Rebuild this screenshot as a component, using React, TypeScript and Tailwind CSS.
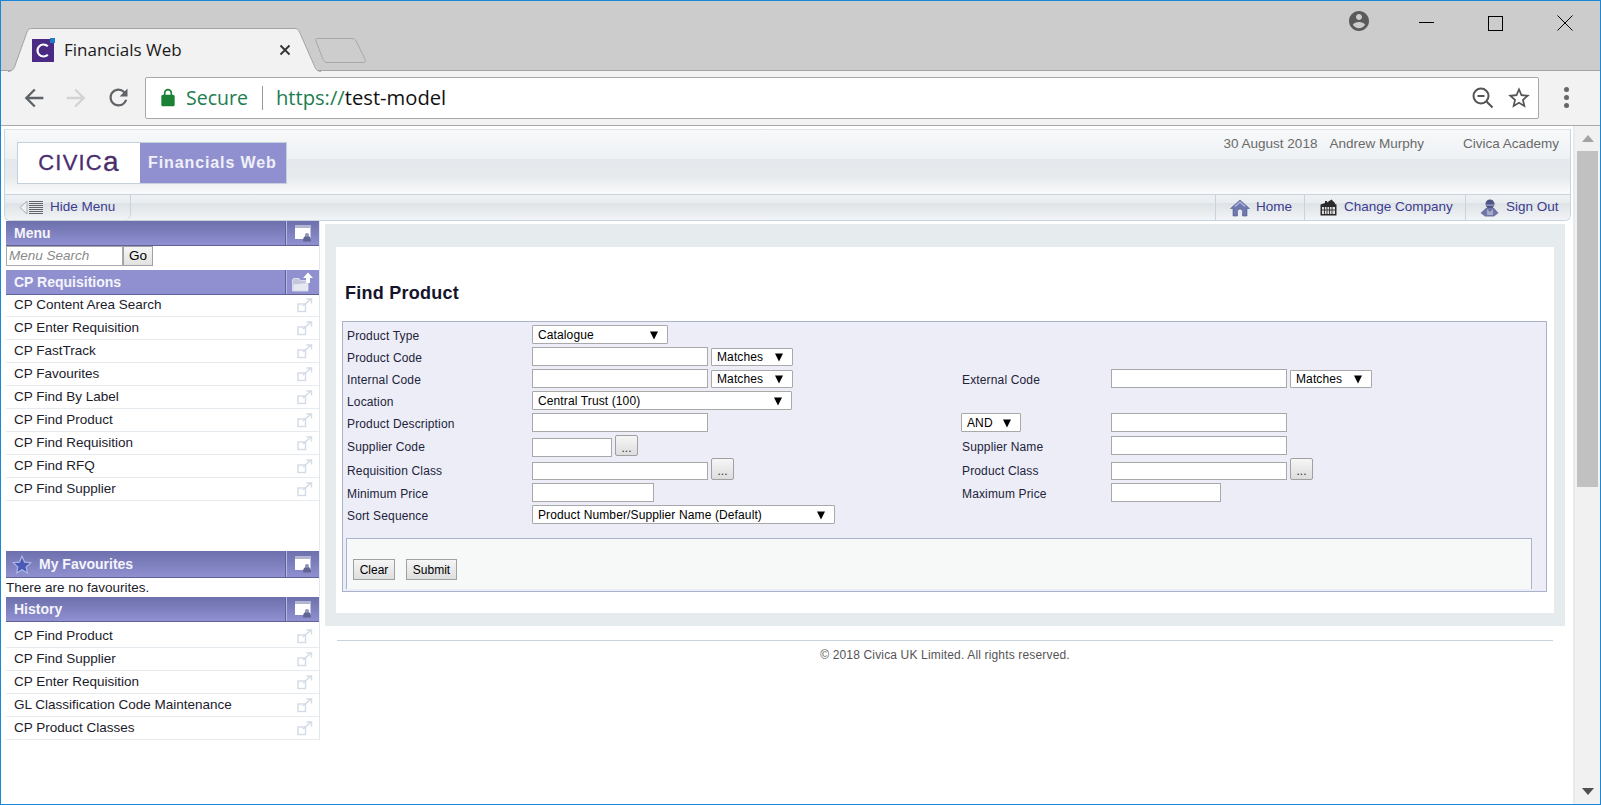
import React from "react";

const ARIAL = "font-['Liberation_Sans',Arial,sans-serif]";
const UI = "font-['Open_Sans','Noto_Sans',sans-serif]";

function Tri() {
  return (
    <svg width="10" height="10" viewBox="0 0 10 10" className="shrink-0">
      <path d="M1 1.5h8L5 9.5z" fill="#000" />
    </svg>
  );
}

function Sel({ w, h = "h-[19px]", text, mt = "" }: { w: string; h?: string; text?: string; mt?: string }) {
  return (
    <div className={`${w} ${h} ${mt} shrink-0 flex items-center justify-between pl-[5px] pr-[8px] bg-white border border-[#a9a9a9] rounded-[1px] text-[12px] leading-none tracking-[0.12px] text-black`}>
      <span className="whitespace-nowrap">{text}</span>
      <Tri />
    </div>
  );
}

function Inp({ w, h = "h-[19px]", mt = "" }: { w: string; h?: string; mt?: string }) {
  return <input className={`${w} ${h} ${mt} shrink-0 bg-white border border-[#a9a9a9] outline-none`} />;
}

function Dots({ w, h = "h-[22px]" }: { w: string; h?: string }) {
  return (
    <button className={`${w} ${h} shrink-0 ml-[3px] bg-[linear-gradient(#f6f6f6,#dddddd)] border border-[#a0a0a0] rounded-[2px] text-[12px] leading-none pt-[4px] text-[#333]`}>
      ...
    </button>
  );
}

function Label({ children }: { children: React.ReactNode }) {
  return <span className="text-[12px] leading-none tracking-[0.15px] text-[#23233a] whitespace-nowrap">{children}</span>;
}

function ItemIcon() {
  return (
    <svg width="16" height="15" viewBox="0 0 16 15" fill="none" stroke="#d3dbe6" strokeWidth="1.4" className="shrink-0">
      <rect x="1" y="6" width="7.5" height="7.5" />
      <path d="M6 8l7.5-6.5M9.5 1h5v4.5" />
    </svg>
  );
}

function Item({ text, h = "h-[23px]", extra = "" }: { text: string; h?: string; extra?: string }) {
  return (
    <div className={`${h} ${extra} flex items-center justify-between pl-[8px] pr-[6px] border-b border-[#e6ebf0] text-[13.5px] text-[#1b1b2b]`}>
      <span className="whitespace-nowrap">{text}</span>
      <ItemIcon />
    </div>
  );
}

function PanelIcon({ kind }: { kind: "window" | "folder" }) {
  if (kind === "folder") {
    return (
      <svg width="22" height="20" viewBox="0 0 22 20">
        <path d="M0.5 7.5L1.5 6.5H7L8.5 8.5H16V19H0.5z" fill="#c4c7dc" stroke="#e8e9f3" strokeWidth="0.8" />
        <path d="M1.5 12.5L16 11v7.5H1.5z" fill="#e6e8f2" />
        <path d="M16 0.5l5 5.5h-3v5h-4V6h-3z" fill="#ffffff" />
      </svg>
    );
  }
  return (
    <svg width="17" height="17" viewBox="0 0 17 17">
      <rect x="0" y="0" width="15.5" height="14" fill="#ffffff" />
      <rect x="0" y="0" width="15.5" height="3" fill="#b4b6cf" />
      <path d="M8 15.5c0-3 1.6-4.5 4-5 2.4.5 4 2 4 5 0 .8-.6 1-1.2 1H9.2C8.6 16.5 8 16.3 8 15.5z" fill="#616592" />
      <circle cx="12" cy="10" r="2" fill="#8d90b8" />
    </svg>
  );
}

function PanelHead({ title, flat, kind = "window", star, h = "h-[25px]" }: { title: string; flat?: boolean; kind?: "window" | "folder"; star?: boolean; h?: string }) {
  return (
    <div className={`flex items-stretch border-b border-[#5f6299] ${h} ${flat ? "bg-[#9090d0]" : "bg-[linear-gradient(#6c70ac,#9090d0)]"}`}>
      <div className="flex-1 flex items-center pl-[8px] pt-[1px] text-[14px] font-bold text-[#f4f4fb] whitespace-nowrap">
        {star && (
          <svg width="20" height="19" viewBox="0 0 24 23" className="-ml-[2px] mr-[7px]">
            <path d="M12 1.5l3.2 7 7.6.8-5.7 5.1 1.6 7.5L12 18l-6.7 3.9 1.6-7.5L1.2 9.3l7.6-.8z" fill="#4a58b8" stroke="#a9b2e0" strokeWidth="1.6" />
          </svg>
        )}
        {title}
      </div>
      <div className="w-[33px] flex items-center justify-center border-l border-[#b8b8e0] shadow-[-1px_0_0_#5f6299]">
        <PanelIcon kind={kind} />
      </div>
    </div>
  );
}

function Row({ h, children }: { h: string; children: React.ReactNode }) {
  return <div className={`${h} flex`}>{children}</div>;
}

function LabelCell({ w, pb = "pb-[1px]", children }: { w: string; pb?: string; children?: React.ReactNode }) {
  return <div className={`${w} ${pb} shrink-0 flex items-center`}>{children}</div>;
}

const reqs = ["CP Content Area Search", "CP Enter Requisition", "CP FastTrack", "CP Favourites", "CP Find By Label", "CP Find Product", "CP Find Requisition", "CP Find RFQ", "CP Find Supplier"];
const hist = ["CP Find Product", "CP Find Supplier", "CP Enter Requisition", "GL Classification Code Maintenance", "CP Product Classes"];

export default function App() {
  return (
    <div className={`${ARIAL} w-[1601px] h-[805px] overflow-hidden flex flex-col border border-[#1a86d8] bg-white`}>
      {/* tab strip */}
      <div className="h-[70px] shrink-0 bg-[#cccccc] border-b border-[#a3a3a3] relative flex items-start justify-end">
        <svg width="370" height="46" viewBox="0 0 370 46" className="absolute left-0 top-[25px]">
          <path d="M7 45.5C11 45.5 12.5 43 13.5 41L26 6C27.2 3 28.5 2.5 31 2.5H293C296 2.5 297 3 298.5 6L313 39C314.5 43 316 45.5 320 45.5" fill="#f2f2f2" stroke="#a3a3a3" strokeWidth="1" />
          <path d="M315 15C314 13 315 12.5 317 12.5H351C353 12.5 354 13.5 355 15L364 33C365 35.5 364 36.5 362 36.5H326C324 36.5 323 35.5 322 33.5z" fill="#cdcdcd" stroke="#a8a8a8" strokeWidth="1" />
        </svg>
        <div className={`${UI} relative mt-[37px] ml-[31px] mr-auto flex items-center w-[259px]`}>
          <svg width="23" height="24" viewBox="0 0 23 24" className="shrink-0">
            <rect x="0" y="1" width="22" height="23" fill="#4a2a82" />
            <rect x="18" y="0" width="5" height="5" fill="#1c7fc4" />
            <path d="M15.8 8.3A6 6 0 1 0 15.8 16.7" fill="none" stroke="#fff" strokeWidth="2.2" />
          </svg>
          <span className="ml-[9px] text-[17px] leading-[24px] text-[#1a1a1a] whitespace-nowrap">Financials Web</span>
          <svg width="12" height="12" viewBox="0 0 12 12" className="ml-auto" stroke="#333" strokeWidth="1.8">
            <path d="M1.5 1.5l9 9M10.5 1.5l-9 9" />
          </svg>
        </div>
        <div className="flex items-center mt-[10px]">
          <svg width="24" height="24" viewBox="0 0 24 24" className="mr-[48px] -translate-y-[2px]">
            <path d="M12 2C6.48 2 2 6.48 2 12s4.48 10 10 10 10-4.48 10-10S17.52 2 12 2zm0 3c1.66 0 3 1.34 3 3s-1.34 3-3 3-3-1.34-3-3 1.34-3 3-3zm0 14.2c-2.5 0-4.71-1.28-6-3.22.03-1.99 4-3.08 6-3.08 1.99 0 5.97 1.09 6 3.08-1.29 1.94-3.5 3.22-6 3.22z" fill="#5a5a5a" />
          </svg>
          <div className="w-[69px] flex justify-start">
            <div className="w-[15px] h-px bg-black -translate-y-[1px]" />
          </div>
          <div className="w-[69px]">
            <div className="w-[15px] h-[15px] border border-black" />
          </div>
          <svg width="16" height="16" viewBox="0 0 16 16" className="mr-[27px]" stroke="#000" strokeWidth="1">
            <path d="M.5.5l15 15M15.5.5l-15 15" />
          </svg>
        </div>
      </div>

      {/* toolbar */}
      <div className="h-[55px] shrink-0 bg-[#f2f2f2] border-b border-[#aaaaaa] flex items-center pb-[1px]">
        <svg width="28" height="28" viewBox="0 0 24 24" className="ml-[19px]">
          <path d="M20 11H7.83l5.59-5.59L12 4l-8 8 8 8 1.41-1.41L7.83 13H20v-2z" fill="#5f6368" />
        </svg>
        <svg width="28" height="28" viewBox="0 0 24 24" className="ml-[14px]">
          <path d="M4 11h12.17l-5.59-5.59L12 4l8 8-8 8-1.41-1.41L16.17 13H4v-2z" fill="#d3d3d3" />
        </svg>
        <svg width="27" height="27" viewBox="0 0 24 24" className="ml-[15px]">
          <path d="M17.65 6.35A7.958 7.958 0 0 0 12 4c-4.42 0-7.99 3.58-7.99 8s3.57 8 7.99 8c3.73 0 6.84-2.55 7.73-6h-2.08A5.99 5.99 0 0 1 12 18c-3.31 0-6-2.69-6-6s2.69-6 6-6c1.66 0 3.14.69 4.22 1.78L13 11h7V4l-2.35 2.35z" fill="#5f6368" />
        </svg>
        <div className={`${UI} ml-[13px] w-[1394px] h-[42px] bg-white border border-[#a9a9a9] rounded-[2px] flex items-center`}>
          <svg width="20" height="22" viewBox="0 0 24 24" className="ml-[12px]">
            <path d="M18 8h-1V6c0-2.76-2.24-5-5-5S7 3.24 7 6v2H6c-1.1 0-2 .9-2 2v10c0 1.1.9 2 2 2h12c1.1 0 2-.9 2-2V10c0-1.1-.9-2-2-2zM9 6c0-1.66 1.34-3 3-3s3 1.34 3 3v2H9V6z" fill="#1b8136" />
          </svg>
          <span className="ml-[8px] text-[19.5px] leading-none text-[#1c7d50] whitespace-nowrap">Secure</span>
          <div className="ml-[14px] h-[24px] w-px bg-[#9a9a9a]" />
          <span className="ml-[13px] text-[20.2px] leading-none whitespace-nowrap">
            <span className="text-[#1c7d50]">https://</span>
            <span className="text-[#111]">test-model</span>
          </span>
          <svg width="24" height="24" viewBox="0 0 24 24" className="ml-auto" fill="none" stroke="#555" strokeWidth="2">
            <circle cx="10" cy="10" r="7.5" />
            <path d="M6.5 10h7M15.5 15.5l6 6" />
          </svg>
          <svg width="26" height="26" viewBox="0 0 24 24" className="ml-[11px] mr-[6px]">
            <path d="M22 9.24l-7.19-.62L12 2 9.19 8.63 2 9.24l5.46 4.73L5.82 21 12 17.27 18.18 21l-1.63-7.03L22 9.24zM12 15.4l-3.76 2.27 1-4.28-3.32-2.88 4.38-.38L12 6.1l1.71 4.04 4.38.38-3.32 2.88 1 4.28L12 15.4z" fill="#555" />
          </svg>
        </div>
        <div className="ml-[25px] flex flex-col gap-[3px]">
          <div className="w-[5px] h-[5px] rounded-full bg-[#666]" />
          <div className="w-[5px] h-[5px] rounded-full bg-[#666]" />
          <div className="w-[5px] h-[5px] rounded-full bg-[#666]" />
        </div>
      </div>

      {/* page */}
      <div className="flex-1 min-h-0 flex">
        <div className="flex-1 min-w-0 pl-[3px] pt-[3px]">
          {/* app header */}
          <div className="w-[1567px] h-[92px] border border-[#c8d3de] border-t-[#dbe2e9] rounded-b-[6px] overflow-hidden flex flex-col">
            <div className="h-[65px] border-b border-[#c8d3de] flex justify-between bg-[linear-gradient(#f7f9fa,#eef1f4_45%,#e5e9ed_46%,#e7ebee_75%,#fafbfc)]">
              <div className="ml-[12px] mt-[12px] h-[42px] flex border border-[#c5d0dd]">
                <div className="w-[122px] bg-white flex items-center justify-center text-[#4b2e6e] text-[22px] leading-none tracking-[1.2px] [-webkit-text-stroke:0.3px_#4b2e6e]">
                  CIVIC<span className="text-[28px] leading-none -mt-[2px] font-normal">a</span>
                </div>
                <div className="w-[146px] bg-[#9090d0] flex items-center pl-[8px] text-[16px] font-bold tracking-[0.9px] text-[#f0f0f8] whitespace-nowrap">Financials Web</div>
              </div>
              <div className="mt-[6px] mr-[11px] flex text-[13.5px] leading-[16px] text-[#6a6a6a] whitespace-nowrap">
                <span>30 August 2018</span>
                <span className="ml-[12px]">Andrew Murphy</span>
                <span className="ml-[39px]">Civica Academy</span>
              </div>
            </div>
            <div className="flex-1 flex justify-between bg-[linear-gradient(#eef1f4,#e9edf0_30%,#dde2e6_32%,#f2f4f6)] text-[13.5px] text-[#3c3c90]">
              <div className="w-[126px] flex items-center border-r border-[#c8d3de] rounded-br-[6px]">
                <svg width="25" height="15" viewBox="0 0 25 15" className="ml-[14px] mr-[6px]" shapeRendering="crispEdges">
                  <path d="M8 1L1 7.5 8 14z" fill="#eef0f2" stroke="#a8adb3" shapeRendering="auto" />
                  <path d="M10 1.5h14M10 3.5h14M10 5.5h14M10 7.5h14M10 9.5h14M10 11.5h14M10 13.5h14" stroke="#62666c" strokeWidth="1" />
                </svg>
                <span className="whitespace-nowrap">Hide Menu</span>
              </div>
              <div className="flex">
                <div className="w-[89px] flex items-center border-l border-[#c8d3de] pl-[14px]">
                  <svg width="20" height="18" viewBox="0 0 20 18" className="mr-[6px]">
                    <path d="M10 1L0.5 9.5H3V17H7.5V12.5C7.5 11 8.5 10 10 10s2.5 1 2.5 2.5V17H17V9.5h2.5z" fill="#7078b0" stroke="#535a92" strokeWidth="0.6" />
                    <path d="M5 7.5L10 3l5 4.5" fill="none" stroke="#b8bcdc" strokeWidth="1.2" />
                  </svg>
                  Home
                </div>
                <div className="w-[161px] flex items-center border-l border-[#c8d3de] pl-[15px]">
                  <svg width="17" height="17" viewBox="0 0 17 17" className="mr-[7px]">
                    <path d="M0.5 16.5V5.5L5 4V2h2v1.5L11.5 0.5 15 4v1l1.5.5v11z" fill="#2b2b2b" />
                    <path d="M2 8h13v7H2z" fill="#dcdcdc" />
                    <path d="M4.5 8v7M7 8v7M9.5 8v7M12 8v7M2 11h13" stroke="#2b2b2b" strokeWidth="0.9" />
                  </svg>
                  Change Company
                </div>
                <div className="w-[105px] flex items-center border-l border-[#c8d3de] pl-[14px]">
                  <svg width="19" height="18" viewBox="0 0 19 18" className="mr-[7px]">
                    <circle cx="10" cy="5" r="4.5" fill="#4f5585" />
                    <path d="M6 5.5h8v1.2H6z" fill="#9ea3c6" />
                    <path d="M0.5 14L6 9h8l4.5 5-4.5 3.5H5z" fill="#6f76a6" />
                    <path d="M7 10l3 3 3-3v6H7z" fill="#a8adce" />
                  </svg>
                  Sign Out
                </div>
              </div>
            </div>
          </div>

          <div className="flex">
            {/* sidebar */}
            <div className="w-[315px] shrink-0 ml-[2px]">
              <div className="w-[314px] h-[519px] border-r border-[#e1e7ec]">
                <PanelHead title="Menu" />
                <div className="h-[24px] flex items-start">
                  <input readOnly placeholder="Menu Search" className="w-[117px] h-[20px] bg-white border border-[#a9a9a9] px-[2px] text-[13.5px] italic outline-none placeholder:text-[#8a8a8a]" />
                  <button className="w-[30px] h-[20px] bg-[linear-gradient(#f5f5f5,#e2e2e2)] border border-[#a0a0a0] text-[13.5px] leading-none text-black">Go</button>
                </div>
                <PanelHead title="CP Requisitions" flat kind="folder" />
                {reqs.map((r, i) => (
                  <Item key={r} text={r} h={i === 0 ? "h-[22px]" : "h-[23px]"} />
                ))}
                <div className="h-[50px]" />
                <PanelHead title="My Favourites" star h="h-[27px]" />
                <div className="h-[19px] text-[13.5px] leading-[20px] text-[#1b1b2b] whitespace-nowrap">There are no favourites.</div>
                <PanelHead title="History" />
                {hist.map((r, i) => (
                  <Item key={r} text={r} h={i === 0 ? "h-[26px]" : "h-[23px]"} extra={i === 0 ? "pt-[4px]" : ""} />
                ))}
              </div>
            </div>

            {/* main */}
            <div className="ml-[4px] flex-1 min-w-0 pt-[3px]">
              <div className="w-[1240px] h-[402px] bg-[#e6ebee] pl-[11px] pr-[11px] pt-[23px] pb-[13px]">
                <div className="h-full bg-white pl-[6px] pr-[7px] pt-[35px]">
                  <h1 className="ml-[3px] text-[18px] leading-[22px] font-bold tracking-[0.25px] text-[#14142b]">Find Product</h1>
                  <div className="mt-[17px] h-[271px] border border-[#a9b3cb] bg-[#ecedf7] pl-[4px] pt-[3px] pr-[14px]">
                    <Row h="h-[22px]">
                      <LabelCell w="w-[185px]"><Label>Product Type</Label></LabelCell>
                      <Sel w="w-[136px]" text="Catalogue" />
                    </Row>
                    <Row h="h-[22px]">
                      <LabelCell w="w-[185px]"><Label>Product Code</Label></LabelCell>
                      <Inp w="w-[176px]" />
                      <Sel w="w-[82px]" h="h-[18px]" mt="mt-[1px] ml-[3px]" text="Matches" />
                    </Row>
                    <Row h="h-[22px]">
                      <LabelCell w="w-[185px]"><Label>Internal Code</Label></LabelCell>
                      <Inp w="w-[176px]" />
                      <Sel w="w-[82px]" h="h-[18px]" mt="mt-[1px] ml-[3px]" text="Matches" />
                      <div className="w-[169px] shrink-0" />
                      <LabelCell w="w-[149px]"><Label>External Code</Label></LabelCell>
                      <Inp w="w-[176px]" />
                      <Sel w="w-[82px]" h="h-[18px]" mt="mt-[1px] ml-[3px]" text="Matches" />
                    </Row>
                    <Row h="h-[22px]">
                      <LabelCell w="w-[185px]"><Label>Location</Label></LabelCell>
                      <Sel w="w-[260px]" text="Central Trust (100)" />
                    </Row>
                    <Row h="h-[22px]">
                      <LabelCell w="w-[185px]"><Label>Product Description</Label></LabelCell>
                      <Inp w="w-[176px]" />
                      <div className="w-[253px] shrink-0" />
                      <div className="w-[150px] shrink-0">
                        <Sel w="w-[60px]" text="AND" />
                      </div>
                      <Inp w="w-[176px]" />
                    </Row>
                    <Row h="h-[23px]">
                      <LabelCell w="w-[185px]" pb="pt-[1px]"><Label>Supplier Code</Label></LabelCell>
                      <Inp w="w-[80px]" mt="mt-[3px]" />
                      <Dots w="w-[23px]" h="h-[21px]" />
                      <div className="w-[324px] shrink-0" />
                      <LabelCell w="w-[149px]" pb="pt-[1px]"><Label>Supplier Name</Label></LabelCell>
                      <Inp w="w-[176px]" mt="mt-[1px]" />
                    </Row>
                    <Row h="h-[25px]">
                      <LabelCell w="w-[185px]" pb="pt-[1px]"><Label>Requisition Class</Label></LabelCell>
                      <Inp w="w-[176px]" mt="mt-[4px]" h="h-[18px]" />
                      <Dots w="w-[23px]" />
                      <div className="w-[228px] shrink-0" />
                      <LabelCell w="w-[149px]" pb="pt-[1px]"><Label>Product Class</Label></LabelCell>
                      <Inp w="w-[176px]" mt="mt-[4px]" h="h-[18px]" />
                      <Dots w="w-[23px]" />
                    </Row>
                    <Row h="h-[22px]">
                      <LabelCell w="w-[185px]"><Label>Minimum Price</Label></LabelCell>
                      <Inp w="w-[122px]" />
                      <div className="w-[308px] shrink-0" />
                      <LabelCell w="w-[149px]"><Label>Maximum Price</Label></LabelCell>
                      <Inp w="w-[110px]" />
                    </Row>
                    <Row h="h-[22px]">
                      <LabelCell w="w-[185px]"><Label>Sort Sequence</Label></LabelCell>
                      <Sel w="w-[303px]" text="Product Number/Supplier Name (Default)" />
                    </Row>
                    <div className="mt-[11px] -ml-[1px] h-[51px] border border-b-0 border-[#a9b3cb] bg-[#f7f9f9] pl-[6px] pt-[20px] flex items-start">
                      <button className="w-[42px] h-[21px] bg-[linear-gradient(#f6f6f6,#dedede)] border border-[#a0a0a0] text-[12px] leading-none text-black">Clear</button>
                      <button className="ml-[11px] w-[51px] h-[21px] bg-[linear-gradient(#f6f6f6,#dedede)] border border-[#a0a0a0] text-[12px] leading-none text-black">Submit</button>
                    </div>
                  </div>
                </div>
              </div>
              <div className="ml-[12px] w-[1216px] mt-[14px] border-t border-[#c8d3de] pt-[7px] text-center text-[12px] leading-[14px] tracking-[0.16px] text-[#555555]">
                © 2018 Civica UK Limited. All rights reserved.
              </div>
            </div>
          </div>
        </div>

        {/* scrollbar */}
        <div className="w-[27px] shrink-0 bg-[#f1f1f1] border-l-2 border-[#e6ebee] flex flex-col items-center">
          <div className="h-[25px] flex items-center justify-center">
            <svg width="12" height="7" viewBox="0 0 12 7"><path d="M6 0l6 7H0z" fill="#a3a3a3" /></svg>
          </div>
          <div className="w-[21px] h-[336px] bg-[#c1c1c1]" />
          <div className="mt-auto h-[25px] flex items-center justify-center">
            <svg width="12" height="7" viewBox="0 0 12 7"><path d="M6 7L0 0h12z" fill="#505050" /></svg>
          </div>
        </div>
      </div>
    </div>
  );
}
